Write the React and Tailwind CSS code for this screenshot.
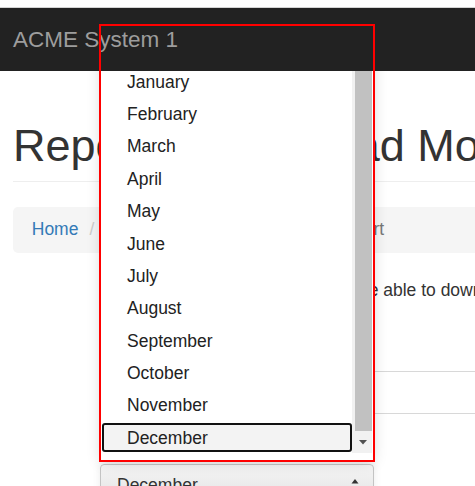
export default function App() {
  const months = [
    "January",
    "February",
    "March",
    "April",
    "May",
    "June",
    "July",
    "August",
    "September",
    "October",
    "November",
  ];
  return (
    <div className="relative isolate h-[486px] w-full overflow-hidden bg-white font-['Liberation_Sans',Arial,sans-serif] text-[#333]">
      <div className="h-[8px] border-b border-[#d4d4d4] bg-white" />
      <nav className="relative z-20 flex h-[63px] items-center bg-[#222] pl-[13px] text-[22.5px] text-[#9d9d9d]">
        ACME System 1
      </nav>
      <main className="w-[1200px] px-[13px]">
        <div className="mt-[49.7px] border-b border-[#eee] pb-[11.25px]">
          <h1 className="whitespace-nowrap text-[45px] leading-[1.1]">
            Repo<span className="tracking-[-0.5px]">rts - Downlo</span>ad Module
          </h1>
        </div>
        <div className="mt-[24.5px] flex h-[46px] items-center rounded-[5px] bg-[#f5f5f5] px-[18.75px] text-[17.5px] leading-[25px]">
          <span className="text-[#337ab7]">Home</span>
          <span className="pl-[11px] pr-[11px] text-[#ccc]">/</span>
          <span className="text-[#337ab7]">Reports</span>
          <span className="pl-[11px] pr-[11px] text-[#ccc]">/</span>
          <span className="whitespace-nowrap pl-[3px] text-[#777]">Download Yearly Report</span>
        </div>
        <p className="ml-[128px] mt-[25px] whitespace-nowrap text-[17.5px] leading-[25px]">
          Select a month and you will be able to download the report.
        </p>
        <div className="ml-[200px] mt-[68.5px] h-[43px] border-y border-[#d8d8d8]" />
        <div className="ml-[87px] mt-[50px] flex h-[42px] w-[274px] items-center justify-between rounded-[4px] border border-[#c4c4c4] bg-gradient-to-b from-[#f5f5f5] to-[#e2e2e2] pl-[16px] pr-[14px] text-[17.5px] text-[#333] shadow-[0_-2px_8px_rgba(0,0,0,0.08)]">
          <span>December</span>
          <svg width="8" height="14" viewBox="0 0 8 14" className="mt-[2px]">
            <path d="M4 0 L7.5 4.5 L0.5 4.5 Z" fill="#333" />
            <path d="M4 14 L7.5 9.5 L0.5 9.5 Z" fill="#333" />
          </svg>
        </div>
      </main>

      {/* open listbox */}
      <div className="absolute left-[101px] top-[26px] z-10 flex h-[434px] w-[272px] bg-white shadow-[0_2px_14px_rgba(0,0,0,0.16)]">
        <div className="flex w-[251px] flex-col text-[17.5px] text-[#222]">
          <div className="h-[39.5px] shrink-0" />
          {months.map((m) => (
            <div key={m} className="flex h-[32.4px] shrink-0 items-center pl-[26px]">
              {m}
            </div>
          ))}
          <div className="flex h-[32.4px] shrink-0 items-center">
            <div className="ml-[1px] flex h-[29px] w-[250px] items-center rounded-[3px] border-2 border-[#111] bg-[#f3f3f3] pl-[23px]">
              December
            </div>
          </div>
        </div>
        <div className="flex h-[427px] w-[20px] flex-col bg-[#f1f1f1]">
          <div className="ml-[3px] h-[405px] w-[17px] bg-[#c1c1c1]" />
          <div className="flex h-[22px] items-center justify-center pl-[2px]">
            <svg width="8" height="5" viewBox="0 0 8 5">
              <path d="M0 0 L8 0 L4 4.5 Z" fill="#505050" />
            </svg>
          </div>
        </div>
      </div>

      {/* red highlight frame */}
      <div className="pointer-events-none absolute left-[99px] top-[24px] z-30 h-[438px] w-[276px] border-2 border-[#ff0000]" />
    </div>
  );
}
